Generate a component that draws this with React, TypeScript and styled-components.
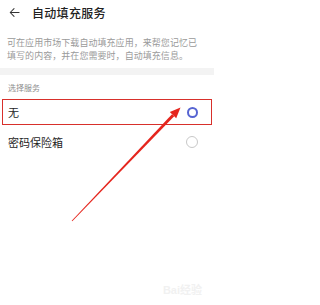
import styled, { createGlobalStyle } from 'styled-components';

const GlobalStyle = createGlobalStyle`
  html, body {
    margin: 0;
    padding: 0;
    background: #ffffff;
  }
  body {
    font-family: "Noto Sans CJK SC", "Noto Sans", sans-serif;
  }
`;

const services = [
  { id: 'none', name: '无', selected: true },
  { id: 'vault', name: '密码保险箱', selected: false },
];

export default function App() {
  return (
    <>
      <GlobalStyle />
      <Page>
        <Header>
          <BackIcon viewBox="0 0 12 12">
            <path d="M11 6H1.5M5.5 1.8L1.3 6l4.2 4.2" />
          </BackIcon>
          <Title>自动填充服务</Title>
        </Header>
        <Description>
          可在应用市场下载自动填充应用，来帮您记忆已填写的内容，并在您需要时，自动填充信息。
        </Description>
        <Divider />
        <SectionLabel>选择服务</SectionLabel>
        <List>
          {services.map(({ id, name, selected }) => (
            <Row key={id} $highlighted={selected}>
              <RowText>{name}</RowText>
              <Radio $checked={selected} />
            </Row>
          ))}
        </List>
        {/* annotation arrow drawn over the page */}
        <Arrow viewBox="0 0 214 305">
          <polygon points="72.3,221.3 71.7,220.7 172.0,114.2 174.2,116.2" />
          <polygon points="180.5,107.5 176.2,118.2 169.8,112.0" />
        </Arrow>
        <Watermark>Bai经验</Watermark>
      </Page>
    </>
  );
}

const Page = styled.div`
  position: relative;
  width: 214px;
  height: 305px;
  overflow: hidden;
  background: #fff;
`;

const Header = styled.div`
  display: flex;
  align-items: center;
  height: 24px;
  padding-left: 9px;
`;

const BackIcon = styled.svg`
  width: 11px;
  height: 11px;
  fill: none;
  stroke: #333;
  stroke-width: 1.1;
  stroke-linecap: round;
  stroke-linejoin: round;
`;

const Title = styled.div`
  margin-left: 12px;
  font-size: 12px;
  font-weight: 500;
  color: #222;
  letter-spacing: 0.3px;
`;

const Description = styled.p`
  margin: 12px 0 0;
  padding: 0 9px 0 7px;
  font-size: 9px;
  line-height: 13px;
  color: #9a9a9a;
  letter-spacing: 0.05px;
`;

const Divider = styled.div`
  height: 7px;
  margin-top: 6px;
  background: #f3f3f3;
`;

const SectionLabel = styled.div`
  padding: 6px 8px 0;
  height: 18px;
  font-size: 8px;
  line-height: 14px;
  color: #8e8e8e;
`;

const List = styled.div`
  display: flex;
  flex-direction: column;
`;

const Row = styled.div<{ $highlighted?: boolean }>`
  display: flex;
  align-items: center;
  justify-content: space-between;
  height: 24px;
  margin: 0 2px 4px;
  padding: 0 13px 0 5px;
  border: 1.3px solid ${({ $highlighted }) => ($highlighted ? '#d8302b' : 'transparent')};
`;

const RowText = styled.span`
  font-size: 11px;
  color: #1e1e1e;
`;

const Radio = styled.span<{ $checked?: boolean }>`
  box-sizing: border-box;
  width: ${({ $checked }) => ($checked ? '11px' : '12px')};
  height: ${({ $checked }) => ($checked ? '11px' : '12px')};
  border-radius: 50%;
  border: ${({ $checked }) => ($checked ? '2.8px solid #5664d2' : '1px solid #c8c8c8')};
  background: #fff;
`;

const Arrow = styled.svg`
  position: absolute;
  left: 0;
  top: 0;
  width: 214px;
  height: 305px;
  fill: #e5251d;
  pointer-events: none;
`;

const Watermark = styled.div`
  position: absolute;
  right: 12px;
  bottom: 8px;
  font-family: "Liberation Sans", "Noto Sans CJK SC", sans-serif;
  font-size: 11px;
  font-weight: bold;
  color: #f1f1f1;
`;
